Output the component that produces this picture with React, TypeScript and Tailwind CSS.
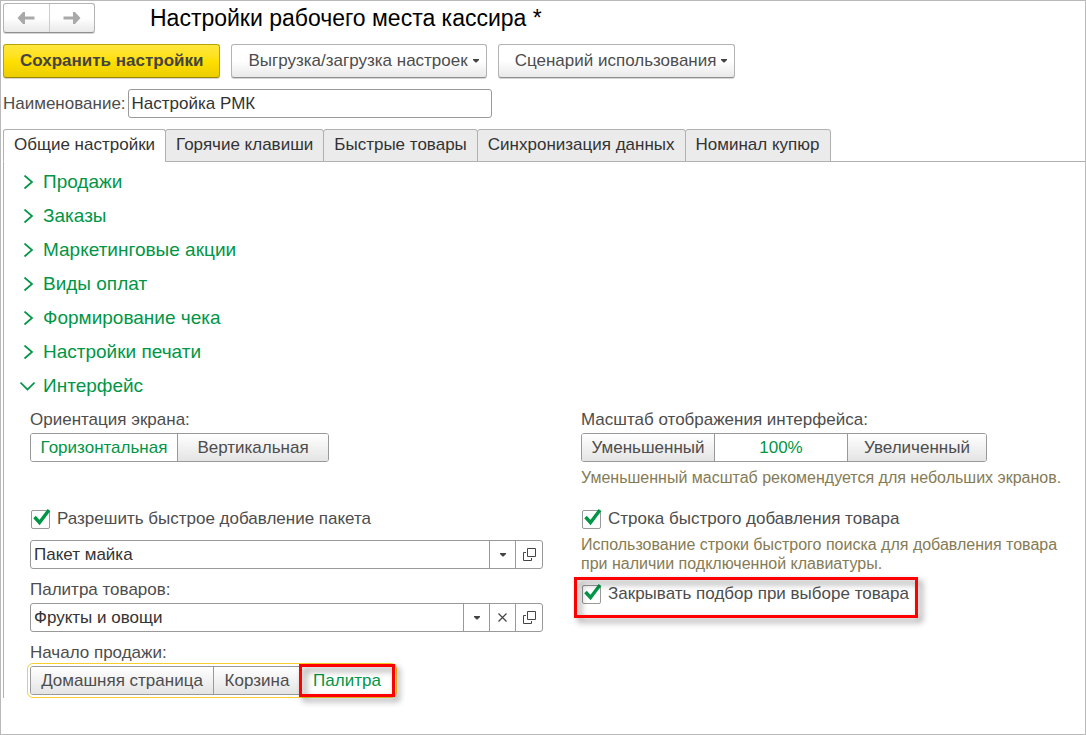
import { useState } from 'react';
import { clsx } from 'clsx';

const TABS = ['Общие настройки', 'Горячие клавиши', 'Быстрые товары', 'Синхронизация данных', 'Номинал купюр'];

const SECTIONS = ['Продажи', 'Заказы', 'Маркетинговые акции', 'Виды оплат', 'Формирование чека', 'Настройки печати', 'Интерфейс'];

interface Option {
  label: string;
  width: string;
  marked?: boolean;
}

interface SegmentedProps {
  name: string;
  label: string;
  options: Option[];
  initial: number;
  focused?: boolean;
}

function NavArrow({ back }: { back?: boolean }) {
  return (
    <svg width="18" height="14" viewBox="0 0 18 14" className={back ? '' : 'rotate-180'} aria-hidden="true">
      <path d="M0.5 7 L6 1 H8 V5.5 H17.5 V8.5 H8 V13 H6 Z" fill="#a9a9a9" />
    </svg>
  );
}

function Caret() {
  return (
    <svg width="6" height="4" viewBox="0 0 6 4" aria-hidden="true">
      <path d="M0 0 H6 V1 L3.5 3.5 H2.5 L0 1 Z" fill="#444" />
    </svg>
  );
}

function OpenIcon() {
  return (
    <svg width="13" height="13" viewBox="0 0 13 13" fill="none" stroke="#444" aria-hidden="true">
      <path d="M4.5 0.5 H12.5 V8.5 H4.5 Z" />
      <path d="M3 4.5 H0.5 V12.5 H8.5 V10" />
    </svg>
  );
}

function ClearIcon() {
  return (
    <svg width="9" height="9" viewBox="0 0 9 9" fill="none" stroke="#444" strokeWidth="1.2" aria-hidden="true">
      <path d="M0.5 0.5 L8.5 8.5 M8.5 0.5 L0.5 8.5" />
    </svg>
  );
}

// Red frame with a drop shadow, laid over the marked control
function Marker({ className }: { className: string }) {
  return (
    <span
      className={clsx(
        'pointer-events-none absolute z-10 border-3 border-[#fe0000] drop-shadow-[4px_4px_3px_rgba(0,0,0,0.45)]',
        className
      )}
    />
  );
}

function MenuButton({ children }: { children: string }) {
  return (
    <button
      type="button"
      className="flex h-[34px] items-center gap-[5px] rounded-[3px] border border-[#b3b3b3] border-b-[#8f8f8f] bg-linear-to-b from-white from-50% to-[#e9e9e9] pr-[7px] pl-4 shadow-[0_1px_0_#d5d5d5]"
    >
      {children}
      <Caret />
    </button>
  );
}

function Segmented({ name, label, options, initial, focused }: SegmentedProps) {
  const [value, setValue] = useState(initial);

  return (
    <fieldset>
      <legend className="mb-[3px] leading-5">{label}</legend>
      <div
        className={clsx(
          'flex h-[29px] w-fit divide-x divide-[#999] rounded-[3px] border border-[#999]',
          focused && 'outline outline-offset-2 outline-[#f8cf2c]'
        )}
      >
        {options.map((option, i) => (
          <label
            key={option.label}
            className={clsx(
              'relative flex items-center justify-center first:rounded-l-[2px] last:rounded-r-[2px]',
              option.width,
              i === value ? 'bg-white text-[#009646]' : 'bg-linear-to-b from-white to-[#e4e4e4]'
            )}
          >
            <input
              type="radio"
              name={name}
              checked={i === value}
              onChange={() => setValue(i)}
              className="absolute inset-0 appearance-none"
            />
            {option.label}
            {option.marked && <Marker className="-inset-x-[2px] -inset-y-[3px]" />}
          </label>
        ))}
      </div>
    </fieldset>
  );
}

function Checkbox({ label }: { label: string }) {
  const [checked, setChecked] = useState(true);

  return (
    <label className="flex h-5 w-fit items-center gap-[7px] pl-px">
      <span className="relative size-[19px]">
        <input
          type="checkbox"
          checked={checked}
          onChange={(e) => setChecked(e.target.checked)}
          className="block size-[19px] appearance-none rounded-[2px] border border-[#999] bg-white"
        />
        {checked && (
          <svg
            viewBox="0 0 19 19"
            className="pointer-events-none absolute inset-0 size-[19px] overflow-visible"
            fill="none"
            stroke="#009646"
            strokeWidth="3.4"
            aria-hidden="true"
          >
            <path d="M3.5 7 L8.5 12.5 L18 0" />
          </svg>
        )}
      </span>
      {label}
    </label>
  );
}

interface PickerProps {
  id: string;
  label: string;
  initial: string;
  clearable?: boolean;
}

function Picker({ id, label, initial, clearable }: PickerProps) {
  const [value, setValue] = useState(initial);

  return (
    <div className="flex h-[29px] divide-x divide-[#999] rounded-[3px] border border-[#999]">
      <input
        id={id}
        aria-label={label}
        value={value}
        onChange={(e) => setValue(e.target.value)}
        className="min-w-0 flex-1 px-[3px] text-[#333] outline-none"
      />
      <button type="button" aria-label="Выбрать из списка" className="flex w-[26px] items-center justify-center">
        <Caret />
      </button>
      {clearable && (
        <button
          type="button"
          aria-label="Очистить"
          onClick={() => setValue('')}
          className="flex w-[26px] items-center justify-center"
        >
          <ClearIcon />
        </button>
      )}
      <button type="button" aria-label="Открыть" className="flex w-[26px] items-center justify-center">
        <OpenIcon />
      </button>
    </div>
  );
}

export default function App() {
  const [tab, setTab] = useState(0);
  const [open, setOpen] = useState('Интерфейс');
  const [name, setName] = useState('Настройка РМК');

  return (
    <div className="min-h-screen border border-[#b9b9b9] bg-white pt-0.5 pl-0.5 font-['Liberation_Sans',Arial,sans-serif] text-[17px] text-[#4d4d4d]">
      <header className="flex h-[30px] items-center">
        <div className="flex h-full w-23 divide-x divide-[#ccc] rounded-[3px] border border-[#b3b3b3] border-b-[#8f8f8f] bg-linear-to-b from-white from-50% to-[#e9e9e9] shadow-[0_1px_0_#d5d5d5]">
          <button type="button" aria-label="Назад" className="flex flex-1 items-center justify-center">
            <NavArrow back />
          </button>
          <button type="button" aria-label="Вперед" className="flex flex-1 items-center justify-center">
            <NavArrow />
          </button>
        </div>
        <h1 className="ml-[55px] text-[23px] leading-[30px] text-black">Настройки рабочего места кассира *</h1>
      </header>

      <div className="mt-[11px] flex gap-[11px]">
        <button
          type="button"
          className="h-[34px] rounded-[3px] border border-[#b8a20c] border-b-[#9c8900] bg-linear-to-b from-[#ffe83c] via-[#ffe000] to-[#eccd00] px-4 font-bold text-[#444] shadow-[0_1px_0_#d5d5d5]"
        >
          Сохранить настройки
        </button>
        <MenuButton>Выгрузка/загрузка настроек</MenuButton>
        <MenuButton>Сценарий использования</MenuButton>
      </div>

      <div className="mt-[11px] flex items-center gap-0.5">
        <label htmlFor="name">Наименование:</label>
        <input
          id="name"
          value={name}
          onChange={(e) => setName(e.target.value)}
          className="h-[29px] w-91 rounded-[3px] border border-[#999] px-[3px] text-[#333] outline-none"
        />
      </div>

      <div role="tablist" className="mt-[11px] flex h-[33px] border-b border-[#b0b0b0]">
        {TABS.map((title, i) => (
          <button
            key={title}
            type="button"
            role="tab"
            aria-selected={i === tab}
            onClick={() => setTab(i)}
            className={clsx(
              '-mr-px h-[33px] rounded-t-[3px] border border-[#b0b0b0] px-2.5 pb-0.5 text-[#333]',
              i === tab ? 'border-b-white bg-white' : 'bg-[#ebebeb]'
            )}
          >
            {title}
          </button>
        ))}
      </div>

      <main className="border-l border-[#b0b0b0] pt-[3px] pb-[3px]">
        {SECTIONS.map((title) => (
          <h2 key={title}>
            <button
              type="button"
              aria-expanded={open === title}
              onClick={() => setOpen(open === title ? '' : title)}
              className="flex h-[34px] items-center gap-2 pl-4 text-[19px] text-[#009646]"
            >
              <svg width="15" height="15" viewBox="0 0 15 15" fill="none" stroke="currentColor" strokeWidth="1.7" aria-hidden="true">
                <path d={open === title ? 'M0.5 3.5 L7.5 10.5 L14.5 3.5' : 'M4.5 0.5 L12 7 L4.5 13.5'} />
              </svg>
              {title}
            </button>
          </h2>
        ))}

        {open === 'Интерфейс' && (
          <div className="pt-[7px] pl-[26px]">
            <div className="grid grid-cols-[513fr_504fr] gap-[38px]">
              <Segmented
                name="orientation"
                label="Ориентация экрана:"
                initial={0}
                options={[
                  { label: 'Горизонтальная', width: 'w-[147px]' },
                  { label: 'Вертикальная', width: 'w-[150px]' },
                ]}
              />
              <div>
                <Segmented
                  name="scale"
                  label="Масштаб отображения интерфейса:"
                  initial={1}
                  options={[
                    { label: 'Уменьшенный', width: 'w-[133px]' },
                    { label: '100%', width: 'w-[133px]' },
                    { label: 'Увеличенный', width: 'w-[138px]' },
                  ]}
                />
                <p className="mt-1.5 text-base leading-5 whitespace-nowrap text-[#857b54]">
                  Уменьшенный масштаб рекомендуется для небольших экранов.
                </p>
              </div>
            </div>

            <div className="mt-[21px] grid grid-cols-[513fr_504fr] gap-[38px]">
              <div className="flex flex-col gap-[11px]">
                <Checkbox label="Разрешить быстрое добавление пакета" />
                <Picker id="bag" label="Пакет" initial="Пакет майка" />
                <div>
                  <label htmlFor="palette" className="mb-[3px] block leading-5">
                    Палитра товаров:
                  </label>
                  <Picker id="palette" label="Палитра товаров" initial="Фрукты и овощи" clearable />
                </div>
                <Segmented
                  name="start"
                  label="Начало продажи:"
                  initial={2}
                  focused
                  options={[
                    { label: 'Домашняя страница', width: 'w-[183px]' },
                    { label: 'Корзина', width: 'w-[87px]' },
                    { label: 'Палитра', width: 'w-[92px]', marked: true },
                  ]}
                />
              </div>
              <div>
                <Checkbox label="Строка быстрого добавления товара" />
                <p className="mt-1.5 mb-[11px] text-base leading-[19px] text-[#857b54]">
                  Использование строки быстрого поиска для добавления товара при наличии подключенной клавиатуры.
                </p>
                <div className="relative w-fit">
                  <Checkbox label="Закрывать подбор при выборе товара" />
                  <Marker className="-top-[7px] -right-[9px] -bottom-[14px] -left-[7px]" />
                </div>
              </div>
            </div>
          </div>
        )}
      </main>
    </div>
  );
}
